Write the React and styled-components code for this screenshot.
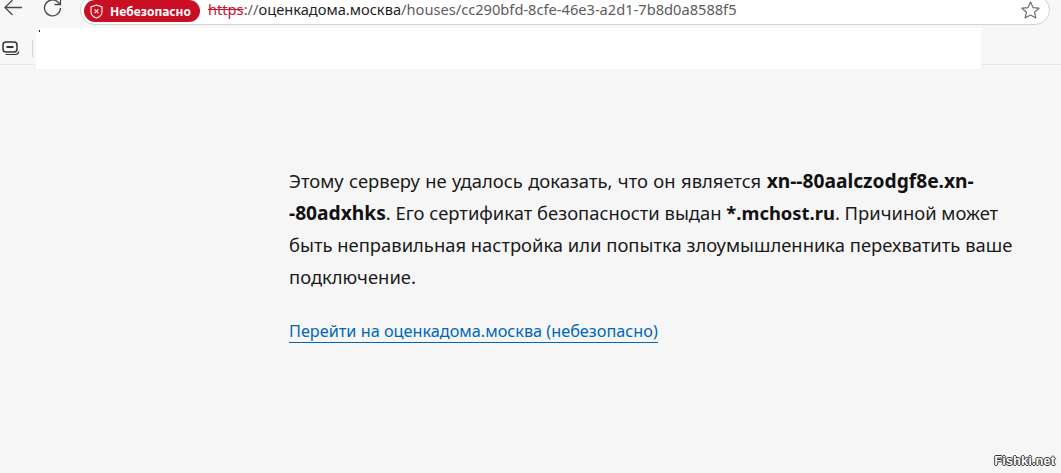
import React from 'react'
import styled, { createGlobalStyle } from 'styled-components'

const GlobalStyle = createGlobalStyle`
    html, body {
        margin: 0;
        padding: 0;
        height: 100%;
        background: #f6f6f6;
        overflow: hidden;
    }
    #root {
        height: 100%;
    }
`

export default function App() {
    return (
        <Page>
            <GlobalStyle />
            <TopBar>
                <NavButton aria-label="back">
                    <svg width="20" height="18" viewBox="0 0 20 18" fill="none" stroke="#4a4a4a" strokeWidth="1.3">
                        <path d="M19 8.5H2M9.5 1L2 8.5L9.5 16" />
                    </svg>
                </NavButton>
                <NavButton aria-label="reload">
                    <svg width="20" height="20" viewBox="0 0 20 20" fill="none" stroke="#4a4a4a" strokeWidth="1.3">
                        <path d="M17.5 10a8 8 0 1 1-2.6-6L17.5 6.5" />
                        <path d="M17.5 0.5V6.5H11.5" />
                    </svg>
                </NavButton>
                <Omnibox>
                    <Badge>
                        <svg width="13" height="15" viewBox="0 0 13 15" fill="none" stroke="#fff" strokeWidth="1.1">
                            <path d="M6.5 1L12 3V7.5C12 10.8 9.7 13 6.5 14C3.3 13 1 10.8 1 7.5V3L6.5 1Z" />
                            <path d="M4.6 5.4L8.4 9.2M8.4 5.4L4.6 9.2" />
                        </svg>
                        Небезопасно
                    </Badge>
                    <Url>
                        <Scheme>https</Scheme>
                        <UrlGrey>://</UrlGrey>
                        <UrlHost>оценкадома.москва</UrlHost>
                        <UrlGrey>/houses/cc290bfd-8cfe-46e3-a2d1-7b8d0a8588f5</UrlGrey>
                    </Url>
                    <Star aria-label="favorite">
                        <svg width="19" height="18" viewBox="0 0 19 18" fill="none" stroke="#6e6e6e" strokeWidth="1.2" strokeLinejoin="round">
                            <path d="M9.5 1L12 6.6L18 7.2L13.5 11.2L14.9 17L9.5 14L4.1 17L5.5 11.2L1 7.2L7 6.6L9.5 1Z" />
                        </svg>
                    </Star>
                </Omnibox>
            </TopBar>
            <BookmarkBar>
                <TabIcon>
                    <svg width="18" height="15" viewBox="0 0 18 15" fill="none" stroke="#333" strokeWidth="1.5">
                        <rect x="1" y="1" width="14" height="10" rx="3" />
                        <path d="M4.5 6H11.5" strokeWidth="2" />
                        <path d="M3.5 13.5H13C15 13.5 16.5 12.5 16.8 10.5" strokeWidth="1.2" />
                    </svg>
                </TabIcon>
                <Divider />
            </BookmarkBar>
            <WhiteMask />
            <Content>
                <Message>
                    <Line $wordSpacing="0.65px">
                        Этому серверу не удалось доказать, что он является <Host>xn--80aalczodgf8e.xn-</Host>
                    </Line>
                    <Line>
                        <Host>-80adxhks</Host>. Его сертификат безопасности выдан <Issuer>*.mchost.ru</Issuer>. Причиной может
                    </Line>
                    <Line>быть неправильная настройка или попытка злоумышленника перехватить ваше</Line>
                    <Line>подключение.</Line>
                </Message>
                <ProceedLink href="#">Перейти на оценкадома.москва (небезопасно)</ProceedLink>
            </Content>
            <Watermark>Fishki.net</Watermark>
        </Page>
    )
}

const Page = styled.div`
    position: relative;
    height: 100%;
    display: flex;
    flex-direction: column;
    background: #f6f6f6;
    font-family: "Noto Sans", "Open Sans", sans-serif;
    overflow: hidden;
`

const TopBar = styled.div`
    height: 26px;
    display: flex;
    align-items: flex-start;
    padding-right: 11px;
    background: #f7f7f7;
`

const NavButton = styled.div`
    width: 40px;
    margin-left: 3px;
    margin-top: -1px;
    display: flex;

    & + & {
        margin-left: 0;
        margin-top: -2px;
        width: 37px;
    }
`

const Omnibox = styled.div`
    flex: 1;
    height: 30px;
    margin-top: -5px;
    box-sizing: border-box;
    padding: 4px 9px 0 3px;
    display: flex;
    align-items: flex-start;
    background: #fff;
    border: 1px solid #d2d2d2;
    border-radius: 15px;
`

const Badge = styled.div`
    width: 116px;
    height: 22px;
    box-sizing: border-box;
    padding-left: 6px;
    display: flex;
    align-items: center;
    gap: 7px;
    flex-shrink: 0;
    border-radius: 11px;
    background: #c80f24;
    color: #fff;
    font-size: 12px;
    font-weight: 700;
`

const Url = styled.div`
    flex: 1;
    margin-left: 8px;
    font-size: 14.65px;
    line-height: 19px;
    white-space: nowrap;
`

const Scheme = styled.span`
    color: #c5162e;
    text-decoration: line-through;
`

const UrlGrey = styled.span`
    color: #5c5c5c;
`

const UrlHost = styled.span`
    color: #1f1f1f;
`

const Star = styled.div`
    display: flex;
    margin-top: 1px;
`

const BookmarkBar = styled.div`
    height: 39px;
    box-sizing: border-box;
    display: flex;
    align-items: center;
    padding: 0 0 2px 2px;
    gap: 12px;
    background: #f7f7f7;
    border-bottom: 1px solid #e8e8e8;
`

const TabIcon = styled.div`
    display: flex;
    margin-top: 8px;
`

const Divider = styled.div`
    width: 1px;
    height: 17px;
    margin-top: 8px;
    background: #d4d4d4;
`

const WhiteMask = styled.div`
    position: absolute;
    left: 36px;
    top: 28px;
    width: 945px;
    height: 41px;
    background: #fff;

    &::before {
        content: "";
        position: absolute;
        left: 3px;
        top: 2px;
        width: 1px;
        height: 2px;
        background: #222;
    }
`

const Content = styled.main`
    padding: 100px 0 0 289px;
    color: #1a1a1a;
`

const Message = styled.div`
    font-size: 18.4px;
    line-height: 32px;
    white-space: nowrap;
`

const Line = styled.div`
    word-spacing: ${props => props.$wordSpacing || 'normal'};
`

const Host = styled.b`
    font-size: 19.2px;
    line-height: 1;
    word-spacing: normal;
    color: #111;
`

const Issuer = styled.b`
    color: #111;
`

const ProceedLink = styled.a`
    display: inline-block;
    margin-top: 28px;
    font-size: 16.25px;
    line-height: 21px;
    color: #0067b8;
    text-decoration: none;
    border-bottom: 1px solid #0067b8;
    white-space: nowrap;
`

const Watermark = styled.div`
    position: absolute;
    right: 6px;
    bottom: 5px;
    font-family: "Liberation Sans", sans-serif;
    font-size: 13px;
    font-weight: 700;
    color: #fff;
    text-shadow: -1px 0 0 #333, 1px 0 0 #333, 0 -1px 0 #333, 0 1px 0 #333;
`
